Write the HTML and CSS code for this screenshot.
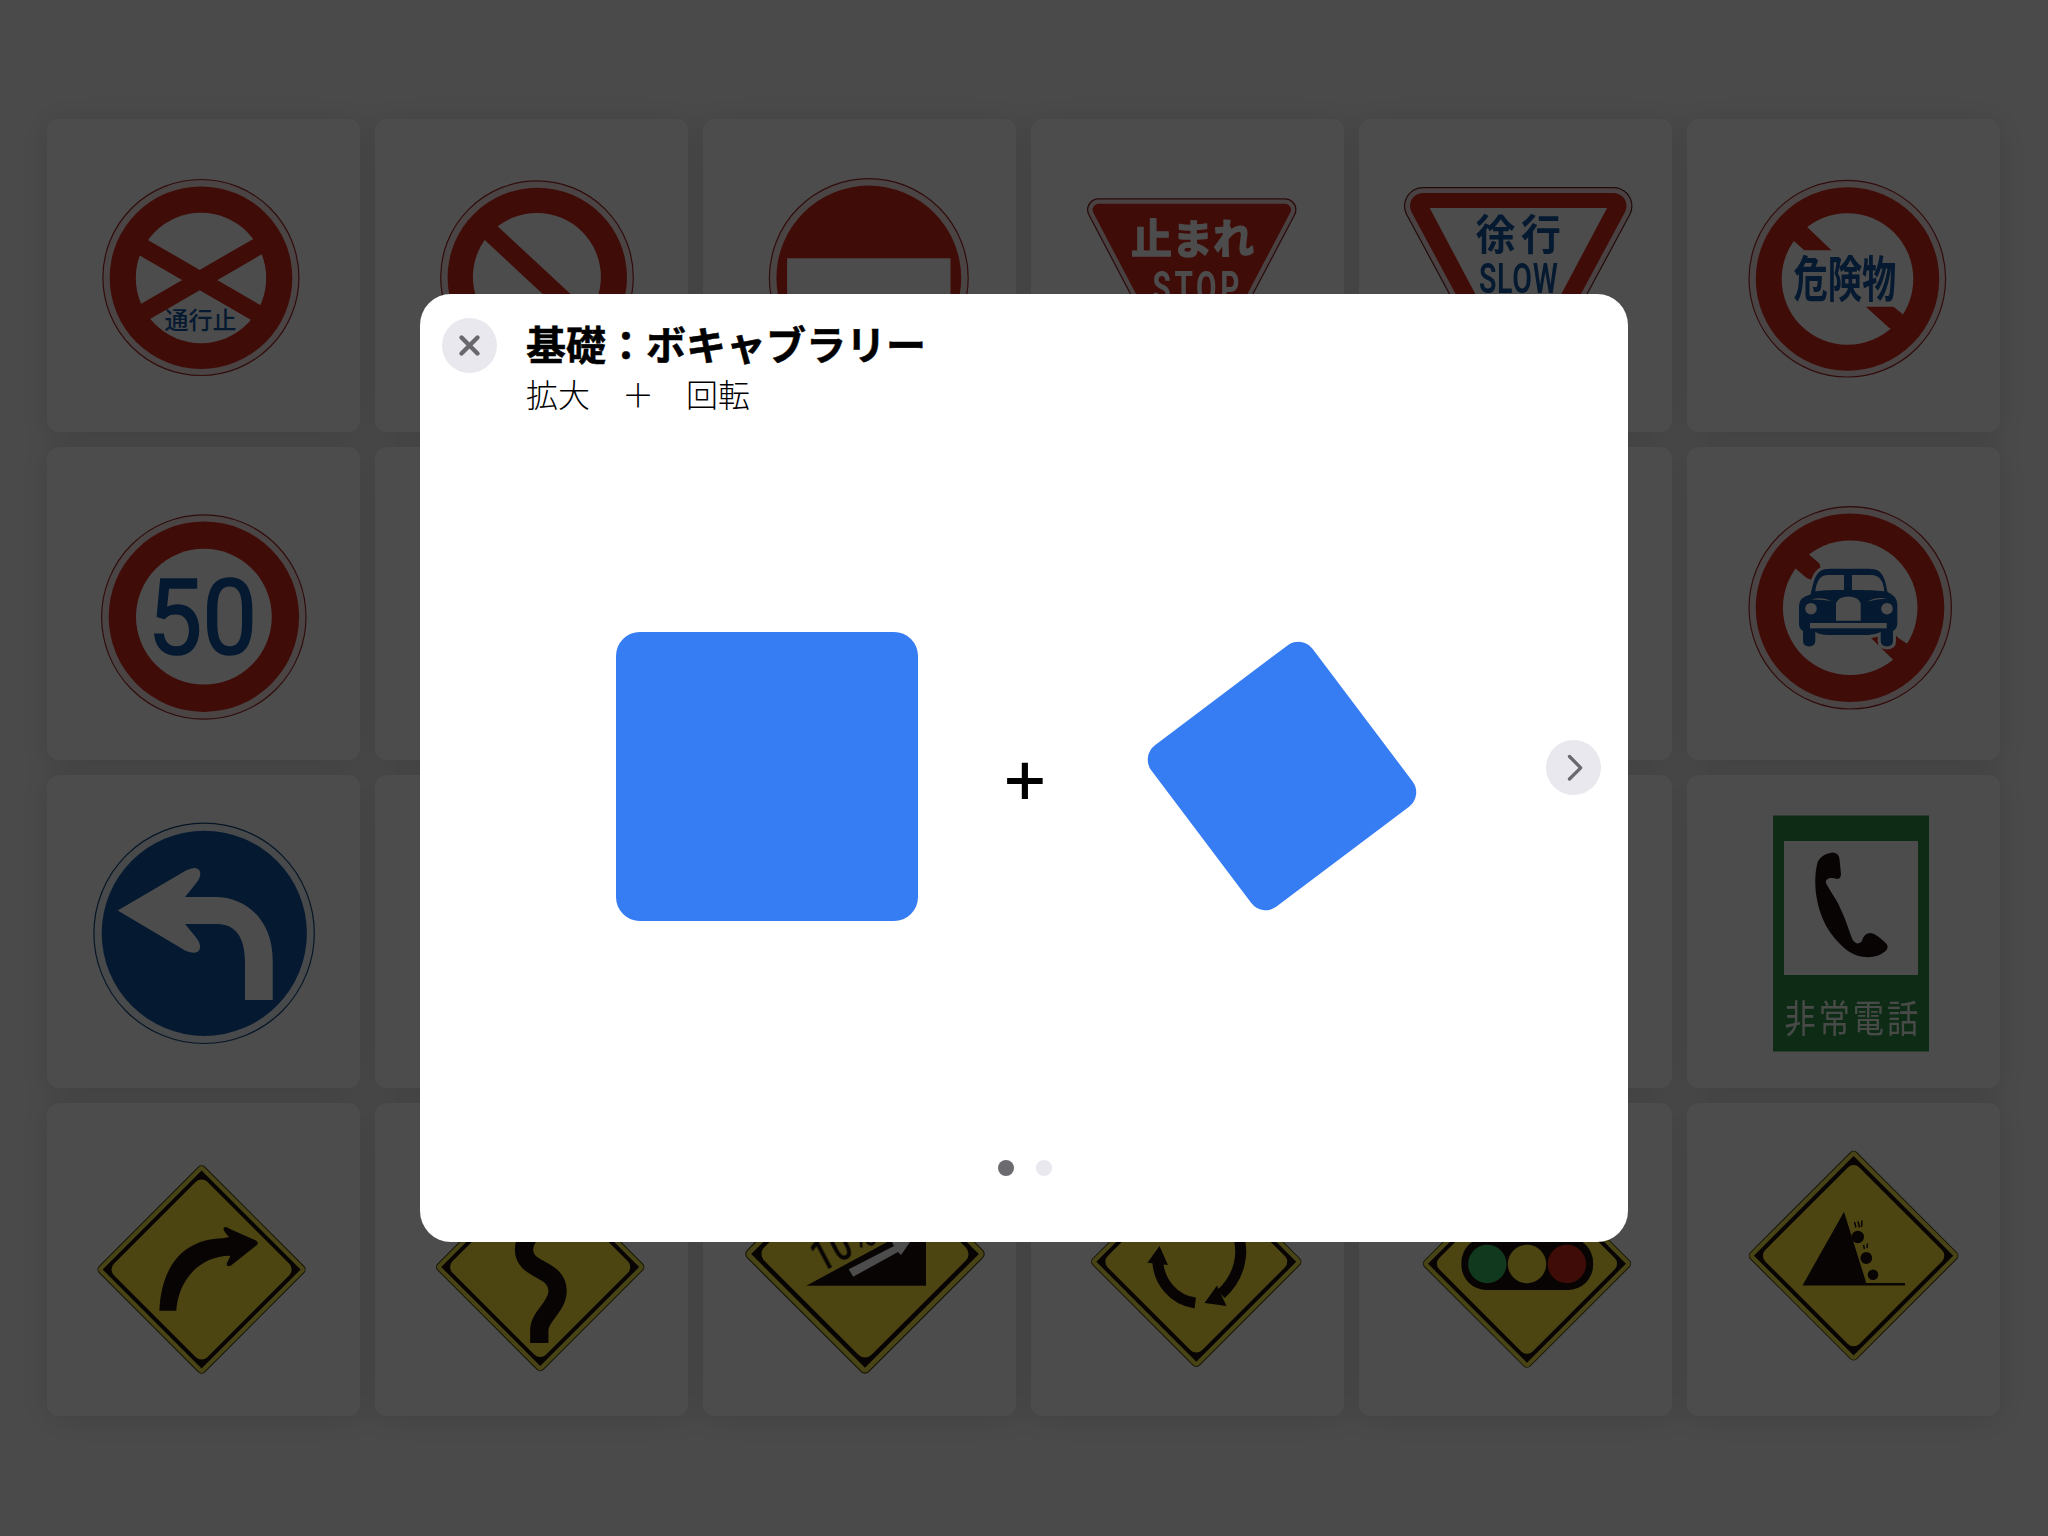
FILE: index.html
```html
<!DOCTYPE html>
<html lang="ja">
<head>
<meta charset="utf-8">
<title>基礎：ボキャブラリー</title>
<link rel="stylesheet" href="styles.css">
</head>
<body>
<svg class="defs" width="0" height="0" aria-hidden="true">
  <defs>
    <g id="warning">
      <rect x="-74.600" y="-74.600" width="149.200" height="149.200" rx="4.5" transform="rotate(45)" fill="#f2e44c" stroke="#4c430c" stroke-width="1"/>
      <rect x="-70" y="-70" width="140" height="140" transform="rotate(45)" class="ink"/>
      <rect x="-66" y="-66" width="132" height="132" rx="8" transform="rotate(45)" class="yellow"/>
    </g>
    <g id="car">
      <path d="M1810.500 594.500C1813 585 1814 575 1821 570.500Q1824 568.800 1830 568.800H1869Q1875 568.800 1878 570.500C1885 575 1886 585 1887.500 592Q1897 596 1897.300 604V624Q1897 629 1893 631V641Q1893 646.400 1887 646.400Q1880.700 646.400 1880.700 641V632Q1875 635 1868 635H1828Q1820 635 1815.300 632V641Q1815.300 646.400 1809 646.400Q1803 646.400 1803 641V631Q1799 629 1799 624V606Q1799 597 1810.500 594.500Z"/>
    </g>
  </defs>
</svg>

<main class="board">
  <div class="card"><svg viewBox="47 119 313 313">
    <circle class="rim red-line" cx="200.900" cy="277.500" r="98"/>
    <circle class="red" cx="201" cy="277.700" r="91.300"/>
    <circle class="white" cx="201" cy="278" r="65.200"/>
    <path class="red-bar" stroke-width="17.600" d="M140 245.500L259.400 314.700M140 314.700L259.400 245.500"/>
    <text class="sign-text blue" x="164.500" y="329" font-size="24" font-weight="500">通行止</text>
  </svg></div>
  <div class="card"><svg viewBox="375 119 313 313">
    <circle class="rim red-line" cx="537" cy="277.200" r="96.300"/>
    <circle class="red" cx="537.300" cy="277.400" r="89.700"/>
    <circle class="white" cx="536.900" cy="277" r="64"/>
    <path class="red-bar" stroke-width="18.900" d="M485 227.400L590 325"/>
  </svg></div>
  <div class="card"><svg viewBox="703 119 313 313">
    <circle class="rim red-line" cx="868.800" cy="278" r="99.400"/>
    <circle class="red" cx="868.800" cy="278" r="92.400"/>
    <rect class="white" x="787.100" y="258.300" width="163.400" height="40"/>
  </svg></div>
  <div class="card"><svg viewBox="1031 119 313 313">
    <g stroke-linejoin="round">
      <path d="M1098.500 209.700H1285L1191.700 387Z" fill="#8c2424" stroke="#8c2424" stroke-width="23"/>
      <path d="M1098.500 209.700H1285L1191.700 387Z" fill="#f7dede" stroke="#f7dede" stroke-width="20.400"/>
      <path class="red" d="M1098.500 209.700H1285L1191.700 387Z" stroke="#d5281b" stroke-width="12"/>
    </g>
    <text class="sign-text white rounded" x="1131" y="253.500" font-size="41" font-weight="700">止まれ</text>
    <text class="latin white" transform="translate(1152.500 303) scale(.66 1)" font-size="45" letter-spacing="5.500" font-weight="700">STOP</text>
  </svg></div>
  <div class="card"><svg viewBox="1359 119 313 313">
    <g stroke-linejoin="round">
      <path d="M1423 206H1613.500L1518.300 383Z" fill="#6c2020" stroke="#6c2020" stroke-width="38"/>
      <path d="M1423 206H1613.500L1518.300 383Z" fill="#f7dede" stroke="#f7dede" stroke-width="35.600"/>
      <path class="red" d="M1423 206H1613.500L1518.300 383Z" stroke="#d5281b" stroke-width="26"/>
    </g>
    <path class="white" d="M1429.700 208H1607L1518.300 375Z"/>
    <text class="sign-text blue" transform="translate(1475.500 249.500) scale(.95 1)" font-size="42" letter-spacing="6" font-weight="700">徐行</text>
    <text class="latin blue" transform="translate(1479 293) scale(.68 1)" font-size="42" letter-spacing="1" font-weight="600">SLOW</text>
  </svg></div>
  <div class="card"><svg viewBox="1687 119 313 313">
    <circle class="rim red-line" cx="1847.300" cy="278.700" r="98.300"/>
    <circle class="red" cx="1847.500" cy="279" r="91.700"/>
    <circle class="white" cx="1847.500" cy="279" r="65.800"/>
    <path class="red" d="M1806.900 226.700L1831.500 250.300H1804.300L1794 241.300L1792 228ZM1865.900 306.700H1893.500L1902.900 314.300V330L1889.500 328.300Z"/>
    <text class="sign-text blue" transform="translate(1793.500 297.300) scale(.7 1)" font-size="49" font-weight="700">危険物</text>
  </svg></div>

  <div class="card"><svg viewBox="47 447 313 313">
    <circle class="rim red-line" cx="203.800" cy="617" r="102.200"/>
    <circle class="red" cx="203.900" cy="616.700" r="95.200"/>
    <circle class="white" cx="203.900" cy="616.700" r="67.900"/>
    <text class="latin blue thick" transform="translate(147.500 654) scale(.93 1)" font-size="105" font-weight="400">50</text>
  </svg></div>
  <div class="card"></div>
  <div class="card"></div>
  <div class="card"></div>
  <div class="card"></div>
  <div class="card"><svg viewBox="1687 447 313 313">
    <circle class="rim red-line" cx="1850.200" cy="607.800" r="101.200"/>
    <circle class="red" cx="1850" cy="607.800" r="94.300"/>
    <circle class="white" cx="1850.200" cy="607.800" r="67.300"/>
    <path class="red" d="M1809 554.500L1819.500 563.600L1825 585L1806.700 577.900L1795.700 568.800V556ZM1870 636.900L1893.300 659.900L1906 658L1907.300 643.800L1898.700 638.200L1885 625Z"/>
    <use href="#car" class="car-gap"/>
    <use href="#car" class="blue"/>
    <g class="white">
      <path d="M1815.300 591.300Q1817 574.900 1828 574.900H1844V590Q1829 589.500 1815.300 591.300ZM1852 574.900H1872Q1883 575.500 1884.300 591.300Q1868 589.500 1852 590Z"/>
      <path d="M1836 620.800V603Q1839 596.500 1848.300 596.500T1860.700 603V620.800Z"/>
      <circle cx="1811" cy="608.700" r="5.800"/><circle cx="1887" cy="608.700" r="5.800"/>
      <rect x="1810" y="623" width="76.700" height="5.300"/>
      <path d="M1811 599.500Q1822 596.500 1831.500 601Q1821 599 1811 599.500ZM1887 598.500Q1876 596.500 1867.500 601.500Q1877 599 1887 598.500Z"/>
    </g>
  </svg></div>

  <div class="card"><svg viewBox="47 775 313 313">
    <circle class="rim blue-line" cx="204.100" cy="933.300" r="110.200"/>
    <circle class="blue" cx="204.300" cy="933.300" r="102.600"/>
    <path class="white" d="M117.700 910.500L186 870.500Q197 865 200 871.500Q201.500 877 195.500 884L185 897H215C247 897 272.700 921 272.700 960V1000H245V962C245 938 236 924 217 924H185L196.500 938Q201.500 944 199.500 949.500Q197 955 186 951Z"/>
  </svg></div>
  <div class="card"></div>
  <div class="card"></div>
  <div class="card"></div>
  <div class="card"></div>
  <div class="card"><svg viewBox="1687 775 313 313">
    <rect class="green" x="1773" y="815.500" width="156" height="236"/>
    <rect class="white" x="1784" y="841" width="134" height="134"/>
    <path class="ink" d="M1817.500 862.500C1820 856 1828 852.400 1833.300 852.400Q1839 853 1839.500 859L1841 874Q1841 879 1837 879C1832 877 1825 877.500 1826 883C1828 888 1838 901 1841.500 911C1846 920 1850 934 1853 940.500Q1858 946 1862 941Q1864 933 1870.500 933C1876 933.500 1884 941 1887.300 945Q1888.500 948.500 1885 951.500C1878 957.500 1868 958.500 1857 955.500C1846 952 1835 940 1828 929C1817 911 1812 884 1817.500 862.500Z"/>
    <text class="sign-text pale" transform="translate(1784.500 1032) scale(.82 1)" font-size="38" letter-spacing="3.700" font-weight="400">非常電話</text>
  </svg></div>

  <div class="card"><svg viewBox="47 1103 313 313">
    <use href="#warning" transform="translate(201.600 1269.500)"/>
    <path class="ink" d="M159.400 1310.700C161 1268 182 1239 223 1238.300L229 1237Q222 1230 224 1227.500Q225.500 1226 230 1229L256 1240.500Q259 1242.500 257 1245L231 1265.500Q227 1267.500 226.500 1264Q228.500 1260 230.400 1255.700C197 1256 178 1283 176.300 1310.700Z"/>
  </svg></div>
  <div class="card"><svg viewBox="375 1103 313 313">
    <use href="#warning" transform="translate(540.200 1267)"/>
    <path fill="none" stroke="#1c1010" stroke-width="18.300" d="M539.300 1343V1330C539.300 1316 557.600 1307 557.600 1291C557.600 1267 523.500 1272 524 1249C524 1240 530 1236 534 1228"/>
  </svg></div>
  <div class="card"><svg viewBox="703 1103 313 313">
    <use href="#warning" transform="translate(865 1254) scale(1.150)"/>
    <path class="ink" d="M806.300 1285.700H926V1221Z"/>
    <path class="white" d="M848.800 1269.300L894 1246L891 1240L915 1235L901 1255L898 1252L853.200 1276.700Z"/>
    <text class="latin ink" transform="translate(821 1273) rotate(-28) scale(.76 1)" font-size="44" letter-spacing="2" font-weight="500">10%</text>
  </svg></div>
  <div class="card"><svg viewBox="1031 1103 313 313">
    <use href="#warning" transform="translate(1196.300 1261.700) scale(1.010)"/>
    <path fill="none" stroke="#1c1010" stroke-width="11" d="M1157.800 1262C1159 1281 1173 1300 1195.300 1303M1238.500 1236C1243.500 1252 1241 1276 1221 1294"/>
    <path class="ink" d="M1159.500 1246L1147.400 1262.700L1168 1265ZM1204.500 1303L1217 1285.500L1226.500 1306Z"/>
  </svg></div>
  <div class="card"><svg viewBox="1359 1103 313 313">
    <use href="#warning" transform="translate(1527 1263.700)"/>
    <rect class="ink" x="1461.400" y="1237.500" width="131.700" height="52.500" rx="25"/>
    <circle cx="1487.300" cy="1264" r="19.200" fill="#38be62"/>
    <circle class="yellow" cx="1527" cy="1264" r="19.200"/>
    <circle class="red" cx="1566.900" cy="1264" r="19.200"/>
  </svg></div>
  <div class="card"><svg viewBox="1687 1103 313 313">
    <use href="#warning" transform="translate(1853.600 1255.700) scale(1.007)"/>
    <path class="ink" d="M1844 1211.700L1866.300 1283H1905V1285.500H1802.500Z"/>
    <g class="ink"><circle cx="1857.800" cy="1237" r="6.200"/><circle cx="1866.300" cy="1258" r="5.900"/><circle cx="1873" cy="1274.700" r="5.300"/></g>
    <path fill="none" stroke="#1c1010" stroke-width="1.500" d="M1854.500 1222L1856 1227.500M1858 1221.500L1859.500 1227.500M1862 1220.500L1861.500 1227M1863.500 1245L1864.500 1249M1867.500 1243.500L1867 1248"/>
  </svg></div>
</main>

<div class="overlay">
  <section class="modal" role="dialog" aria-labelledby="title">
    <header class="modal-header">
      <button class="round-button" aria-label="閉じる">
        <svg width="55" height="55" viewBox="0 0 55 55"><path d="M19.500 19.500L35.500 35.500M35.500 19.500L19.500 35.500" stroke-width="4.400"/></svg>
      </button>
      <div class="heading">
        <h1 class="title" id="title">基礎：ボキャブラリー</h1>
        <p class="subtitle">拡大　＋　回転</p>
      </div>
    </header>
    <div class="stage">
      <div class="square"></div>
      <span class="plus">+</span>
      <div class="square tilted"></div>
    </div>
    <div class="pager"><span class="dot active"></span><span class="dot"></span></div>
    <button class="round-button next" aria-label="次へ">
      <svg width="55" height="55" viewBox="0 0 55 55"><path d="M23.500 16.500L34.700 27.800L23.500 39" stroke-width="3.300"/></svg>
    </button>
  </section>
</div>
</body>
</html>
```
FILE: styles.css
```css
* { box-sizing: border-box; }

body {
  margin: 0;
  height: 1536px;
  overflow: hidden;
  background: #f9f9f9;
  font-family: "Noto Sans CJK JP", sans-serif;
}

.defs { position: absolute; }

/* grid of road-sign cards */
.board {
  display: grid;
  grid-template-columns: repeat(6, 313px);
  grid-auto-rows: 313px;
  gap: 15px;
  padding: 119px 47px 0;
  filter: drop-shadow(0 3px 17px rgba(0, 0, 0, .13));
}

.card {
  background: #fff;
  border-radius: 12px;
  overflow: hidden;
}

.card svg { display: block; width: 313px; height: 313px; }

.red { fill: #d5281b; }
.blue { fill: #1157a5; }
.green { fill: #2f9349; }
.yellow { fill: #ffe63c; }
.white { fill: #fff; }
.pale { fill: #f2f7f2; }
.ink { fill: #1c1010; }
.rim { fill: #f7e4e4; stroke-width: 1.2; }
.red-line { stroke: #a32626; }
.blue-line { fill: #f0f3f8; stroke: #11477f; }
.red-bar { fill: none; stroke: #d5281b; }
.car-gap { fill: #fff; stroke: #fff; stroke-width: 6; }
.sign-text { font-family: "Noto Sans CJK JP", sans-serif; }
.latin { font-family: Roboto, sans-serif; }

/* thick lettering with softened corners */
.rounded { stroke: #fff; stroke-width: 1.4; stroke-linejoin: round; }
.thick { stroke: #1157a5; stroke-width: 1.6; }

/* dialog */
.overlay {
  position: fixed;
  inset: 0;
  display: flex;
  align-items: center;
  justify-content: center;
  background: rgba(0, 0, 0, .7);
}

.modal {
  position: relative;
  width: 1208px;
  height: 948px;
  border-radius: 31px;
  background: #fff;
}

.modal-header {
  display: flex;
  gap: 29px;
  height: 115px;
  padding: 24px 0 0 22px;
}

.round-button {
  display: block;
  flex: none;
  width: 55px;
  height: 55px;
  padding: 0;
  border: 0;
  border-radius: 50%;
  background: #e8e8ee;
}

.round-button svg {
  display: block;
  fill: none;
  stroke: #68686d;
  stroke-linecap: round;
  stroke-linejoin: round;
}

.next { position: absolute; right: 27px; top: 446px; }

.heading { padding-top: 5px; }

.title {
  margin: 0;
  font-size: 40px;
  line-height: 40px;
  font-weight: 700;
  color: #000;
  -webkit-text-stroke: .5px #000;
}

.subtitle {
  margin: 14px 0 0;
  font-size: 32px;
  line-height: 32px;
  font-weight: 300;
  color: #000;
}

.stage {
  display: flex;
  align-items: center;
  height: 734px;
  padding-left: 196px;
}

.square {
  width: 302px;
  height: 289px;
  border-radius: 24px;
  background: #367cf3;
}

.plus {
  display: flex;
  justify-content: center;
  width: 36px;
  margin: 0 138px 0 89px;
  padding-top: 4px;
  font-family: "Noto Sans", sans-serif;
  font-size: 75px;
  line-height: 74px;
  font-weight: 500;
}

.tilted {
  width: 202px;
  height: 202px;
  border-radius: 18px;
  transform: rotate(-37deg);
}

.pager {
  display: flex;
  justify-content: center;
  gap: 22px;
  padding: 17px 0 0 2px;
}

.dot {
  width: 16px;
  height: 16px;
  border-radius: 50%;
  background: #e8e8ee;
}

.active { background: #6c6c70; }
```
